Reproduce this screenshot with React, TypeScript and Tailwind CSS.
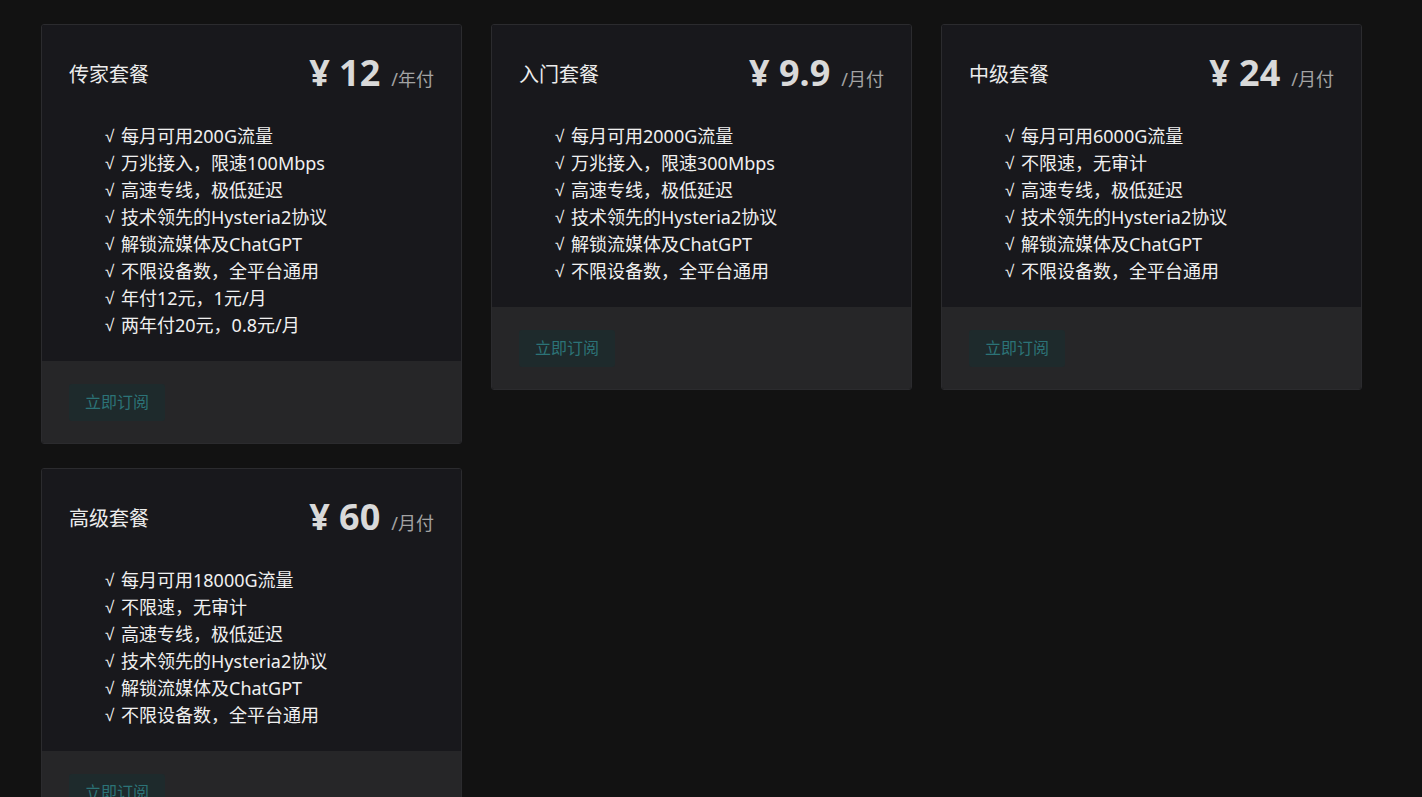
const plans = [
  {
    name: '传家套餐',
    price: '12',
    unit: '/年付',
    features: [
      '每月可用200G流量',
      '万兆接入，限速100Mbps',
      '高速专线，极低延迟',
      '技术领先的Hysteria2协议',
      '解锁流媒体及ChatGPT',
      '不限设备数，全平台通用',
      '年付12元，1元/月',
      '两年付20元，0.8元/月',
    ],
  },
  {
    name: '入门套餐',
    price: '9.9',
    unit: '/月付',
    features: [
      '每月可用2000G流量',
      '万兆接入，限速300Mbps',
      '高速专线，极低延迟',
      '技术领先的Hysteria2协议',
      '解锁流媒体及ChatGPT',
      '不限设备数，全平台通用',
    ],
  },
  {
    name: '中级套餐',
    price: '24',
    unit: '/月付',
    features: [
      '每月可用6000G流量',
      '不限速，无审计',
      '高速专线，极低延迟',
      '技术领先的Hysteria2协议',
      '解锁流媒体及ChatGPT',
      '不限设备数，全平台通用',
    ],
  },
  {
    name: '高级套餐',
    price: '60',
    unit: '/月付',
    features: [
      '每月可用18000G流量',
      '不限速，无审计',
      '高速专线，极低延迟',
      '技术领先的Hysteria2协议',
      '解锁流媒体及ChatGPT',
      '不限设备数，全平台通用',
    ],
  },
]

function PlanCard({ plan }: { plan: (typeof plans)[number] }) {
  return (
    <div className="border border-[#2b2b2e] rounded-[3px] overflow-hidden">
      <div className="bg-[#18181c] px-[27px] pt-[28px] pb-[22px]">
        <div className="flex items-center justify-between h-[44px]">
          <span className="text-[20px] text-[#ececec] leading-[28px]">{plan.name}</span>
          <div className="flex items-baseline mb-[4px]">
            <span className="text-[36px] font-bold text-[#d9d9d9] leading-[44px]">¥ {plan.price}</span>
            <span className="ml-[11px] text-[18px] text-[#a3a3a3]">{plan.unit}</span>
          </div>
        </div>
        <ul className="mt-[26px] pl-[36px]">
          {plan.features.map((f) => (
            <li key={f} className="flex items-center h-[27px] text-[18px] leading-[27px] text-[#f0f0f0]">
              <span className="w-[16px] font-['Liberation_Sans',sans-serif] text-[17px] leading-none">√</span>
              <span>{f}</span>
            </li>
          ))}
        </ul>
      </div>
      <div className="bg-[#262628] px-[27px] pt-[23px] pb-[22px]">
        <button className="bg-[#1e2a2c] text-[#2c7377] text-[16px] leading-[37px] px-[16px] rounded-[3px]">
          立即订阅
        </button>
      </div>
    </div>
  )
}

export default function App() {
  return (
    <div
      className="w-full min-h-[100dvh] bg-[#121212] pt-[24px] pl-[41px]"
      style={{ fontFamily: '"Noto Sans", "Noto Sans CJK SC", sans-serif' }}
    >
      <div className="grid grid-cols-[421px_421px_421px] gap-x-[29px] gap-y-[24px] items-start">
        {plans.map((p) => (
          <PlanCard key={p.name} plan={p} />
        ))}
      </div>
    </div>
  )
}
